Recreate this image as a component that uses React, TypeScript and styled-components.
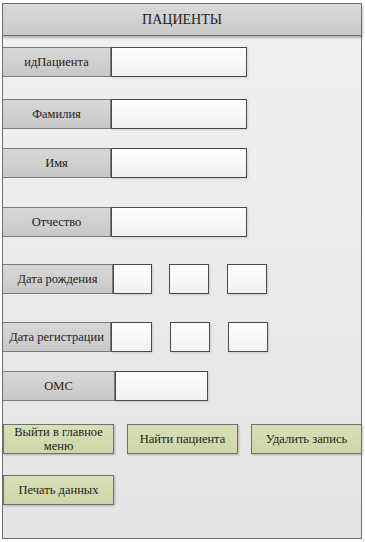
import React from "react";
import styled, { createGlobalStyle } from "styled-components";

const FONT = `"Liberation Serif", "Times New Roman", serif`;

const Global = createGlobalStyle`
  html, body { margin: 0; padding: 0; background: #ffffff; }
  * { box-sizing: border-box; }
`;

const Frame = styled.div`
  margin: 3px 0 0 2px;
  width: 360px;
  height: 536px;
  border: 1px solid #6e6e6e;
  border-top: none;
  background: linear-gradient(to bottom, #f1f1f1 0%, #e4e4e4 100%);
  display: flex;
  flex-direction: column;
  font-family: ${FONT};
  color: #1e1e1e;
`;

const Header = styled.div`
  height: 33px;
  margin: 0 -1px;
  border: 1px solid #6e6e6e;
  background: linear-gradient(to bottom, #dadada, #c9c9c9);
  box-shadow: 1px 2px 2px rgba(0, 0, 0, 0.25);
  display: flex;
  align-items: center;
  justify-content: center;
  font-family: ${FONT};
  font-size: 14px;
  color: #222;
`;

const Row = styled.div<{ $top: number }>`
  display: flex;
  align-items: stretch;
  height: 30px;
  margin-top: ${(p) => p.$top}px;
`;

const Label = styled.div<{ $w: number }>`
  width: ${(p) => p.$w}px;
  flex: none;
  border: 1px solid #7a7a7a;
  border-left: none;
  background: linear-gradient(to bottom, #d8d8d8, #c8c8c8);
  display: flex;
  align-items: center;
  justify-content: center;
  font-family: ${FONT};
  font-size: 12.5px;
  white-space: nowrap;
`;

const Field = styled.div<{ $w: number; $gap?: number }>`
  width: ${(p) => p.$w}px;
  flex: none;
  margin-left: ${(p) => p.$gap ?? 0}px;
  border: 1px solid #4a4a4a;
  background: linear-gradient(to bottom, #ffffff, #f0f0f0);
  box-shadow: 1px 1px 2px rgba(0, 0, 0, 0.12);
`;

const Button = styled.div<{ $w: number; $gap?: number }>`
  width: ${(p) => p.$w}px;
  flex: none;
  margin-left: ${(p) => p.$gap ?? 0}px;
  border: 1px solid #707070;
  background: linear-gradient(to bottom, #d8e0b8, #cdd6a6);
  box-shadow: 1px 1px 2px rgba(0, 0, 0, 0.25);
  display: flex;
  align-items: center;
  justify-content: center;
  text-align: center;
  font-family: ${FONT};
  font-size: 12.5px;
  line-height: 14px;
  color: #1e1e1e;
`;

export default function App() {
  return (
    <>
      <Global />
      <Frame>
        <Header>ПАЦИЕНТЫ</Header>
        <Row $top={11}>
          <Label $w={108}>идПациента</Label>
          <Field $w={136} />
        </Row>
        <Row $top={22}>
          <Label $w={108}>Фамилия</Label>
          <Field $w={136} />
        </Row>
        <Row $top={19}>
          <Label $w={108}>Имя</Label>
          <Field $w={136} />
        </Row>
        <Row $top={29}>
          <Label $w={108}>Отчество</Label>
          <Field $w={136} />
        </Row>
        <Row $top={27}>
          <Label $w={110}>Дата рождения</Label>
          <Field $w={39} />
          <Field $w={40} $gap={17} />
          <Field $w={40} $gap={18} />
        </Row>
        <Row $top={28}>
          <Label $w={108}>Дата регистрации</Label>
          <Field $w={41} />
          <Field $w={40} $gap={18} />
          <Field $w={40} $gap={18} />
        </Row>
        <Row $top={19}>
          <Label $w={112}>ОМС</Label>
          <Field $w={93} />
        </Row>
        <Row $top={23}>
          <Button $w={111}>Выйти в главное меню</Button>
          <Button $w={111} $gap={13}>Найти пациента</Button>
          <Button $w={111} $gap={13}>Удалить запись</Button>
        </Row>
        <Row $top={21}>
          <Button $w={111}>Печать данных</Button>
        </Row>
      </Frame>
    </>
  );
}
